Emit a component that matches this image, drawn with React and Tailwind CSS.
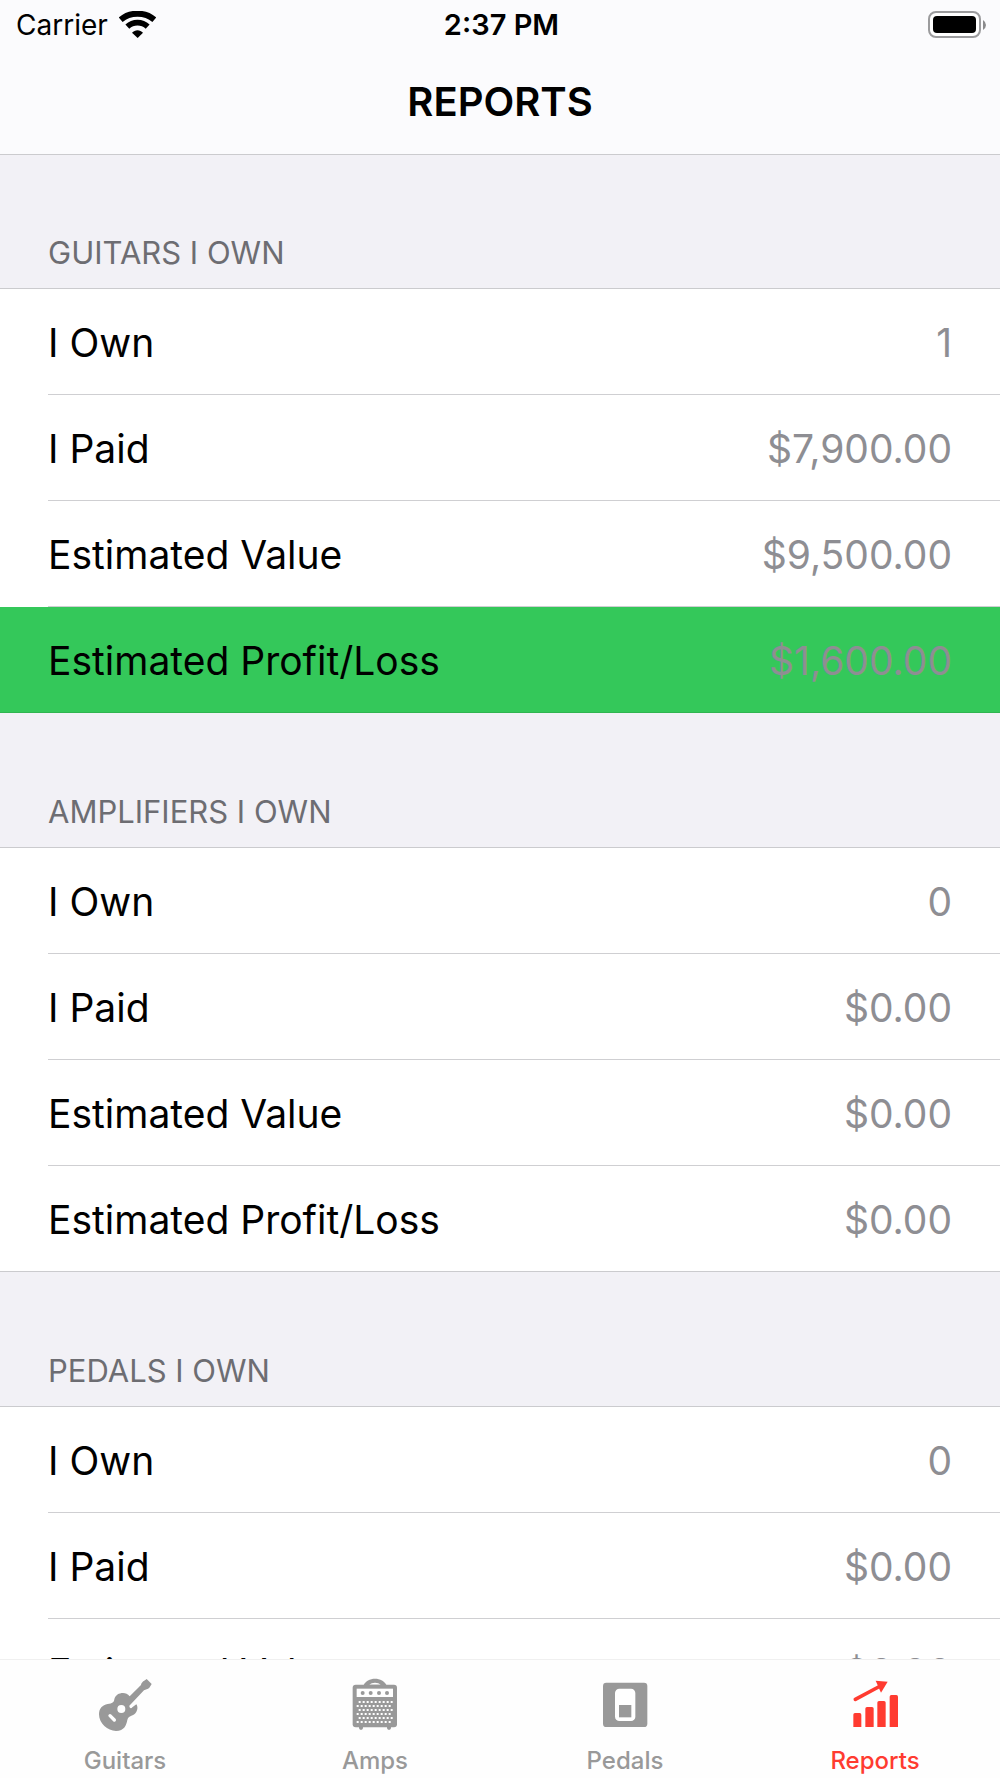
import React, { useState } from "react";

const sections = [
  {
    title: "Guitars I Own",
    rows: [
      { label: "I Own", value: "1" },
      { label: "I Paid", value: "$7,900.00" },
      { label: "Estimated Value", value: "$9,500.00" },
      { label: "Estimated Profit/Loss", value: "$1,600.00", profit: true },
    ],
  },
  {
    title: "Amplifiers I Own",
    rows: [
      { label: "I Own", value: "0" },
      { label: "I Paid", value: "$0.00" },
      { label: "Estimated Value", value: "$0.00" },
      { label: "Estimated Profit/Loss", value: "$0.00" },
    ],
  },
  {
    title: "Pedals I Own",
    rows: [
      { label: "I Own", value: "0" },
      { label: "I Paid", value: "$0.00" },
      { label: "Estimated Value", value: "$0.00" },
    ],
  },
];

const App = () => {
  const [tab, setTab] = useState("Reports");

  return (
    <div className="flex h-screen flex-col overflow-hidden bg-[#f2f1f6] font-['Inter',sans-serif] text-black">
      <header className="shrink-0 border-b border-[#cbcbce] bg-[#fbfbfd]">
        <StatusBar />
        <h1 className="flex h-[104px] items-center justify-center text-[40px] font-semibold">
          REPORTS
        </h1>
      </header>

      <main className="min-h-0 flex-1 overflow-hidden">
        {sections.map((s) => (
          <ReportSection key={s.title} title={s.title} rows={s.rows} />
        ))}
      </main>

      <nav className="grid shrink-0 grid-cols-4 border-t border-[#f0f0f0] bg-[#fefefe]">
        {tabs.map(({ name, Icon }) => (
          <button
            key={name}
            type="button"
            onClick={() => setTab(name)}
            className={`flex flex-col items-center pt-[15px] pb-[3px] ${
              tab === name ? "text-[#ff3b30]" : "text-[#999999]"
            }`}
          >
            <Icon />
            <span className="mt-[11px] text-[24px] leading-[29px] font-medium">
              {name}
            </span>
          </button>
        ))}
      </nav>
    </div>
  );
};

const StatusBar = () => (
  <div className="grid h-[50px] grid-cols-3 items-center pr-[13px] pl-[16px] text-[28px]">
    <div className="flex items-center gap-[11px]">
      <span>Carrier</span>
      <WifiIcon />
    </div>
    <span className="text-center text-[29px] font-semibold">2:37 PM</span>
    <BatteryIcon />
  </div>
);

const ReportSection = ({ title, rows }) => (
  <section className="group">
    <h2 className="flex h-[135px] items-end border-b border-[#cbcbce] pb-[15px] pl-[48px] text-[31px] leading-[40px] text-[#6d6d72] uppercase group-first:h-[134px]">
      {title}
    </h2>
    <dl>
      {rows.map((row) => (
        <ReportRow key={row.label} {...row} />
      ))}
    </dl>
  </section>
);

// The separator is inset, except under the last row of a section
const ReportRow = ({ label, value, profit }) => (
  <div
    className={`group/row pl-[48px] last:border-b last:pl-0 ${
      profit ? "border-[#30b550] bg-[#34c85a]" : "border-[#cbcbce] bg-white"
    }`}
  >
    <div className="flex h-[106px] items-center justify-between border-b border-[#cfcfd2] pt-[3px] pr-[48px] text-[39px] group-last/row:h-[105px] group-last/row:border-b-0 group-last/row:pl-[48px]">
      <dt>{label}</dt>
      <dd className="text-[#8e8e93]">{value}</dd>
    </div>
  </div>
);

const WifiIcon = () => (
  <svg width="37" height="28" viewBox="0 0 111 84" fill="none" stroke="black" aria-hidden="true">
    <path d="M5 26 C33 2 78 2 106 26" strokeWidth="18" />
    <path d="M25 47 C42 31 69 31 86 47" strokeWidth="17" />
    <path d="M39 65 C48 55 63 55 72 65 L56 81Z" fill="black" stroke="none" />
  </svg>
);

const BatteryIcon = () => (
  <svg className="justify-self-end" width="59" height="28" viewBox="0 0 59 28" aria-hidden="true">
    <rect x="1" y="1" width="51" height="25" rx="7" fill="white" stroke="#9b9b9d" strokeWidth="2" />
    <rect x="5" y="5" width="43" height="17" rx="4" fill="black" />
    <path d="M55 9 Q58 11 58 14 Q58 17 55 19Z" fill="#8a8a8c" />
  </svg>
);

const TabSvg = ({ children }) => (
  <svg width="60" height="60" viewBox="0 0 180 180" fill="currentColor" aria-hidden="true">
    {children}
  </svg>
);

const GuitarIcon = () => (
  <TabSvg>
    <path d="M155 12 L170 27 L163 38 C158 44 152 42 147 46 L103 92 C103 99 108 102 112 97 L124 88 C130 96 128 110 118 118 C108 124 100 124 97 135 C94 150 88 168 63 168 C38 168 12 145 12 118 C12 100 22 90 38 87 C52 86 57 82 58 73 C61 60 72 54 84 54 C92 54 98 57 104 64 L138 30 C140 22 143 20 155 12Z" />
    <circle cx="79" cy="102" r="12" fill="white" />
    <path d="M45 122 L58 135" stroke="white" strokeWidth="10" strokeLinecap="round" />
  </TabSvg>
);

const AmpIcon = () => (
  <TabSvg>
    <path d="M55 32 C66 4 114 4 125 32Z" />
    <path d="M73 29 C80 21 100 21 107 29Z" fill="white" />
    <rect x="23" y="29" width="133" height="128" rx="9" />
    <path d="M42 155 h12 v5 l-3 4 h-6 l-3 -4Z M126 155 h12 v5 l-3 4 h-6 l-3 -4Z" />
    <rect x="35" y="41" width="109" height="25" fill="white" />
    {[53, 77, 102, 126].map((x) => (
      <circle key={x} cx={x} cy="54" r="6" />
    ))}
    {[0, 1, 2, 3, 4, 5].map((row) =>
      [0, 1, 2, 3, 4, 5, 6, 7, 8].map((col) => (
        <rect
          key={`${row}-${col}`}
          x={(row % 2 ? 35 : 41) + col * 12}
          y={78 + row * 12}
          width="6"
          height="6"
          fill="white"
        />
      ))
    )}
  </TabSvg>
);

const PedalIcon = () => (
  <TabSvg>
    <rect x="24" y="23" width="133" height="133" rx="10" />
    <rect x="60" y="41" width="61" height="97" rx="13" fill="white" />
    <rect x="72" y="90" width="37" height="37" />
  </TabSvg>
);

const ReportsIcon = () => (
  <TabSvg>
    <path d="M31 73 L106 33" stroke="currentColor" strokeWidth="11" strokeLinecap="round" />
    <path d="M92 17 L128 20 L108 53Z" />
    <path d="M25 156 V119 q0 -5 5 -5 h14 q5 0 5 5 V156Z" />
    <path d="M61 156 V101 q0 -5 5 -5 h15 q5 0 5 5 V156Z" />
    <path d="M97 156 V83 q0 -5 5 -5 h15 q5 0 5 5 V156Z" />
    <path d="M134 156 V65 q0 -5 5 -5 h15 q5 0 5 5 V156Z" />
  </TabSvg>
);

const tabs = [
  { name: "Guitars", Icon: GuitarIcon },
  { name: "Amps", Icon: AmpIcon },
  { name: "Pedals", Icon: PedalIcon },
  { name: "Reports", Icon: ReportsIcon },
];

export default App;
